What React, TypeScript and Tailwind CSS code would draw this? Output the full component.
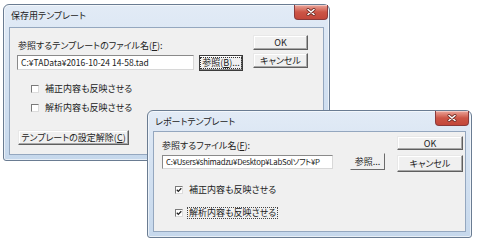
import type { ReactNode } from "react";

const jp = "font-['Noto_Sans_CJK_JP',sans-serif] [font-feature-settings:'palt'] text-[#222]";
const btn =
  "flex items-center justify-center border border-t-[#e8e8e8] border-l-[#e8e8e8] border-r-[#5f5f5f] border-b-[#5f5f5f] bg-[#f0f0f0] shadow-[inset_-1px_-1px_0_#a8a8a8,inset_1px_1px_0_#ffffff] text-[9px] leading-none";
const field =
  "flex items-center overflow-hidden whitespace-nowrap border border-t-[#8a8a8a] border-l-[#8a8a8a] border-r-[#d8d8d8] border-b-[#d8d8d8] bg-white pl-[3px] leading-none";

function CloseButton({ className }: { className: string }) {
  return (
    <div
      className={`flex h-[15px] w-[34px] items-center justify-center rounded-b-[4px] border border-t-0 border-[#8a3a3a] bg-gradient-to-b from-[#eaa59b] via-[#cc5546] to-[#c3473a] shadow-[inset_0_1px_0_#f3c6bf] ${className}`}
    >
      <svg width="10" height="8" viewBox="0 0 10 8">
        <path d="M2 1.5 L8 6.5 M8 1.5 L2 6.5" stroke="#6b2a24" strokeWidth="3" strokeLinecap="round" />
        <path d="M2 1.5 L8 6.5 M8 1.5 L2 6.5" stroke="#ffffff" strokeWidth="1.6" strokeLinecap="round" />
      </svg>
    </div>
  );
}

function Window({
  title,
  className,
  titleH,
  closeClass,
  children,
}: {
  title: string;
  className: string;
  titleH: string;
  closeClass: string;
  children: ReactNode;
}) {
  return (
    <div
      className={`absolute flex flex-col rounded-t-[6px] rounded-b-[3px] border border-[#6a7c92] bg-gradient-to-b from-[#e2ebf6] via-[#d3e1f1] to-[#c6d8ec] px-[5px] pb-[5px] shadow-[inset_0_0_0_1px_rgba(255,255,255,0.6)] ${className}`}
    >
      <div className={`flex items-start justify-between ${titleH}`}>
        <span className="pl-[2px] pt-[5px] font-['Noto_Sans_CJK_JP',sans-serif] text-[9px] leading-[12px] text-[#1b1b1b]">
          {title}
        </span>
        <CloseButton className={closeClass} />
      </div>
      <div className="flex-1 border border-[#94a7bf] bg-[#f0f0f0]">{children}</div>
    </div>
  );
}

function Check({ label, checked, focus }: { label: string; checked?: boolean; focus?: boolean }) {
  return (
    <div className="flex h-[11px] items-center gap-[4px]">
      <div className="flex h-[8px] w-[8px] items-center justify-center border border-t-[#7a7a7a] border-l-[#7a7a7a] border-r-[#dcdcdc] border-b-[#dcdcdc] bg-white">
        {checked ? (
          <svg width="6" height="6" viewBox="0 0 6 6">
            <path d="M0.8 2.8 L2.3 4.4 L5.3 1.2" stroke="#222" strokeWidth="1.3" fill="none" />
          </svg>
        ) : null}
      </div>
      <span
        className={`text-[9px] leading-[10px] ${focus ? "border border-dotted border-[#444] px-[1px]" : "border border-transparent px-[1px]"}`}
      >
        {label}
      </span>
    </div>
  );
}

export default function App() {
  return (
    <div className={`relative h-[240px] w-[480px] overflow-hidden bg-white ${jp}`}>
      <Window
        title="保存用テンプレート"
        className="left-[3px] top-[4px] h-[157px] w-[327px]"
        titleH="h-[22px]"
        closeClass="-mr-[4px]"
      >
        <div className="flex pl-[7px] pt-[7px]">
          <div className="flex w-[226px] flex-col">
            <div className="mt-[5px] pl-[1px] text-[9px] leading-[11px]">
              参照するテンプレートのファイル名(<u>F</u>):
            </div>
            <div className="mt-[4px] flex items-start gap-[5px]">
              <div className={`${field} h-[15px] w-[177px] text-[8.5px]`}>C:¥TAData¥2016-10-24 14-58.tad</div>
              <div className="flex h-[16px] w-[44px] items-center justify-center border border-[#3c3c3c] bg-[#f0f0f0] shadow-[inset_-1px_-1px_0_#8a8a8a,inset_1px_1px_0_#ffffff]">
                <span className="border border-dotted border-[#333] px-[1px] text-[9px] leading-[10px]">
                  参照(<u>B</u>)...
                </span>
              </div>
            </div>
            <div className="mt-[12px] flex flex-col gap-[8px] pl-[14px]">
              <Check label="補正内容も反映させる" />
              <Check label="解析内容も反映させる" />
            </div>
            <div className={`${btn} mt-[17px] ml-[1px] h-[15px] w-[111px]`}>
              テンプレートの設定解除(<u>C</u>)
            </div>
          </div>
          <div className="ml-[10px] flex w-[55px] flex-col gap-[3px]">
            <div className={`${btn} h-[15px]`}>OK</div>
            <div className={`${btn} h-[15px]`}>キャンセル</div>
          </div>
        </div>
      </Window>

      <Window
        title="レポートテンプレート"
        className="left-[147px] top-[110px] h-[128px] w-[325px] shadow-[0_0_5px_rgba(0,0,0,0.2)]"
        titleH="h-[20px]"
        closeClass="-mr-[3px]"
      >
        <div className="flex pl-[8px] pt-[4px]">
          <div className="flex w-[223px] flex-col">
            <div className="mt-[4px] text-[9px] leading-[11px]">
              参照するファイル名(<u>F</u>):
            </div>
            <div className="mt-[2px] flex items-start gap-[17px]">
              <div className={`${field} mt-[2px] h-[14px] w-[171px] text-[7.8px] tracking-[-0.25px]`}>
                C:¥Users¥shimadzu¥Desktop¥LabSolソフト¥P
              </div>
              <div className="flex h-[17px] w-[35px] items-center justify-center border border-t-[#f0f0f0] border-l-[#f0f0f0] border-r-[#6b6b6b] border-b-[#6b6b6b] bg-[#f0f0f0] text-[9px] leading-none">
                参照...
              </div>
            </div>
            <div className="mt-[14px] flex flex-col gap-[12px] pl-[13px]">
              <Check label="補正内容も反映させる" checked />
              <Check label="解析内容も反映させる" checked focus />
            </div>
          </div>
          <div className="ml-[12px] flex w-[66px] flex-col gap-[5px]">
            <div className={`${btn} h-[14px]`}>OK</div>
            <div className={`${btn} h-[17px]`}>キャンセル</div>
          </div>
        </div>
      </Window>
    </div>
  );
}
